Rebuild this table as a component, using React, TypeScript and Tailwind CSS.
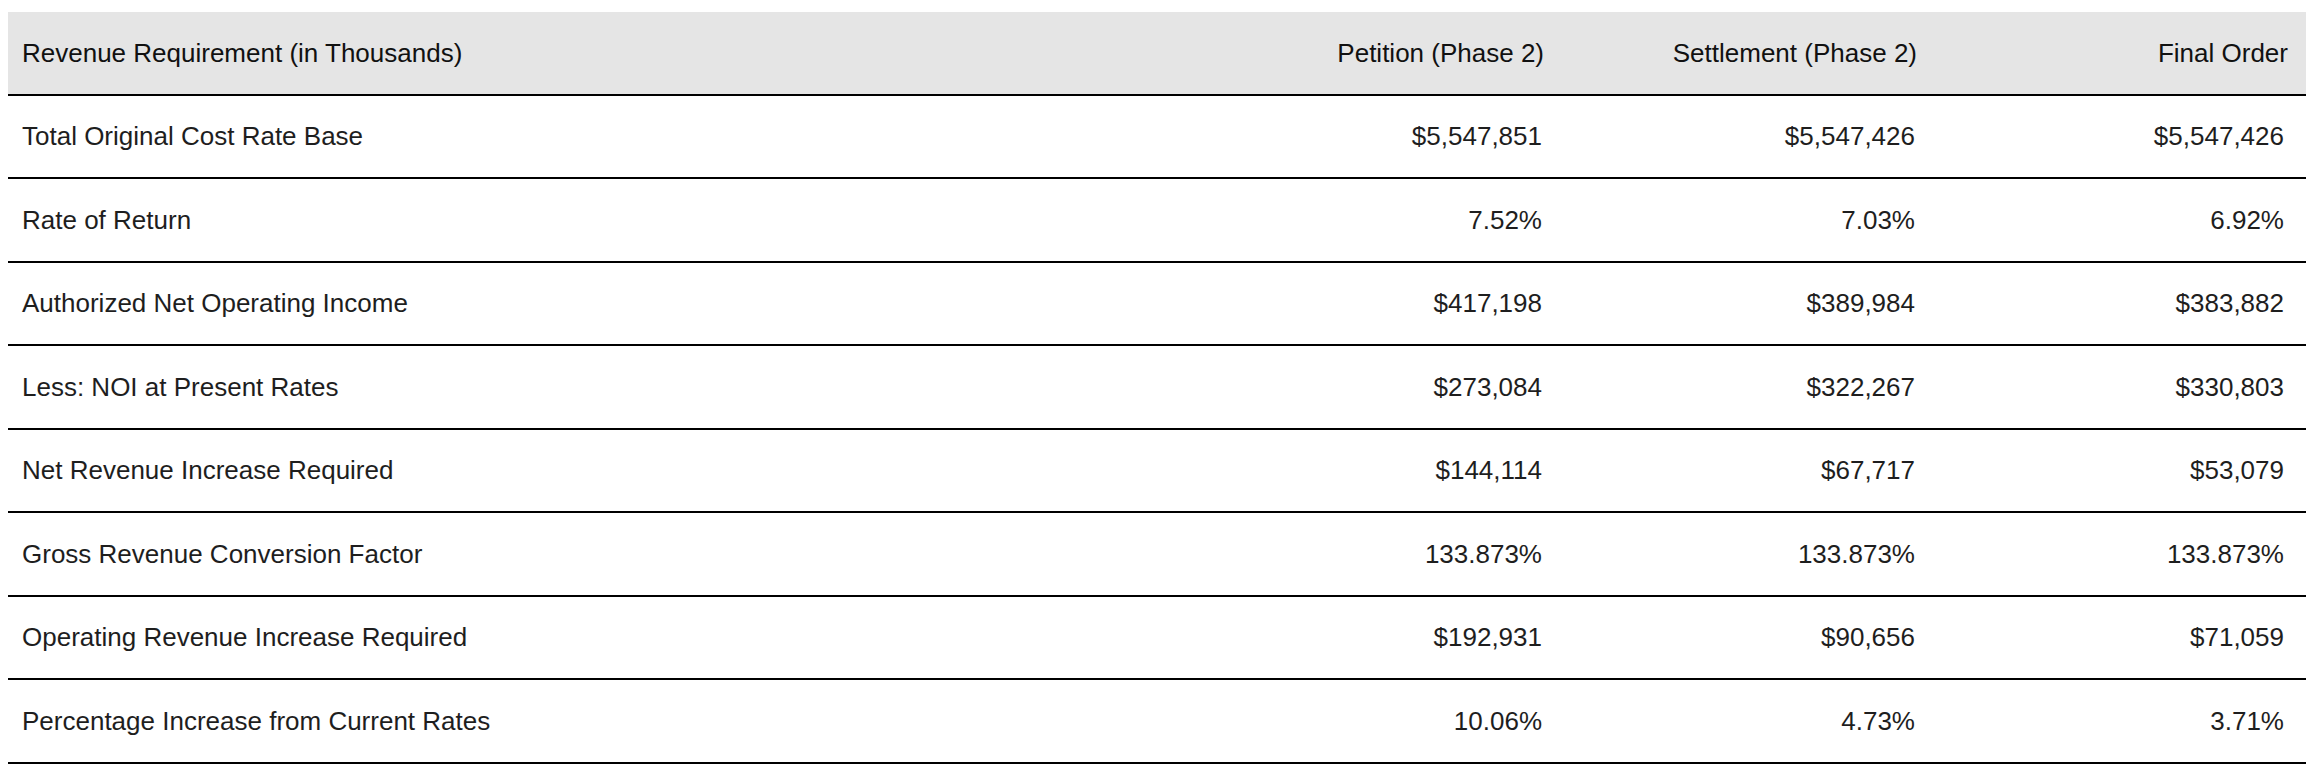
import React from "react";

const rows: [string, string, string, string][] = [
  ["Total Original Cost Rate Base", "$5,547,851", "$5,547,426", "$5,547,426"],
  ["Rate of Return", "7.52%", "7.03%", "6.92%"],
  ["Authorized Net Operating Income", "$417,198", "$389,984", "$383,882"],
  ["Less: NOI at Present Rates", "$273,084", "$322,267", "$330,803"],
  ["Net Revenue Increase Required", "$144,114", "$67,717", "$53,079"],
  ["Gross Revenue Conversion Factor", "133.873%", "133.873%", "133.873%"],
  ["Operating Revenue Increase Required", "$192,931", "$90,656", "$71,059"],
  ["Percentage Increase from Current Rates", "10.06%", "4.73%", "3.71%"],
];

export default function App() {
  return (
    <div
      className="min-h-screen bg-white pt-[12px] px-[8px]"
      style={{ fontFamily: '"Liberation Sans", Arial, Helvetica, sans-serif' }}
    >
      <div className="grid grid-cols-[1fr_373px_373px_371px] text-[26px] leading-none">
        {[
          "Revenue Requirement (in Thousands)",
          "Petition (Phase 2)",
          "Settlement (Phase 2)",
          "Final Order",
        ].map((h, i) => (
          <div
            key={h}
            className={`h-[83.5px] flex items-center bg-[#e5e5e5] border-b-2 border-black text-[#111] ${
              i === 0 ? "pl-[14px]" : "justify-end pr-[18px]"
            }`}
          >
            {h}
          </div>
        ))}
        {rows.map((r) =>
          r.map((c, i) => (
            <div
              key={r[0] + i}
              className={`h-[83.5px] flex items-center border-b-2 border-black text-[#1e1e1e] ${
                i === 0 ? "pl-[14px]" : i === 3 ? "justify-end pr-[22px]" : "justify-end pr-[20px]"
              }`}
            >
              {c}
            </div>
          ))
        )}
      </div>
    </div>
  );
}
